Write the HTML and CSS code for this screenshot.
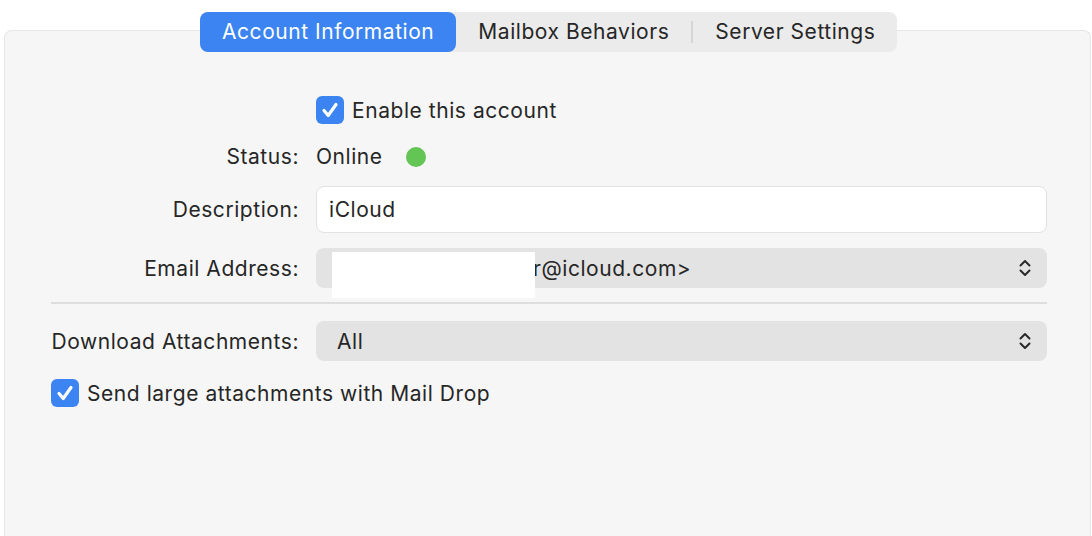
FILE: index.html
```html
<!DOCTYPE html>
<html lang="en">
<head>
    <meta charset="UTF-8">
    <meta name="viewport" content="width=device-width, initial-scale=1.0">
    <title>Account Information</title>
    <link rel="stylesheet" href="styles.css">
</head>
<body>
    <div class="tabs">
        <div class="tab active">Account Information</div>
        <div class="tab">Mailbox Behaviors</div>
        <div class="tab-sep"></div>
        <div class="tab">Server Settings</div>
    </div>
    <div class="panel">
        <div class="row row-enable">
            <div></div>
            <label class="check">
                <span class="box">
                    <svg width="28" height="28" viewBox="0 0 28 28"><path d="M8 14.5 L12.2 19.5 L20 8.5" fill="none" stroke="#fff" stroke-width="3.2" stroke-linecap="round" stroke-linejoin="round"/></svg>
                </span>
                Enable this account
            </label>
        </div>
        <div class="row row-status">
            <div class="label">Status:</div>
            <div class="status">Online <span class="dot"></span></div>
        </div>
        <div class="row row-desc">
            <div class="label">Description:</div>
            <div class="input">iCloud</div>
        </div>
        <div class="row row-email">
            <div class="label">Email Address:</div>
            <div class="select">
                <span class="email-text">r@icloud.com&gt;</span>
                <span class="redact"></span>
                <svg class="chev" width="16" height="22" viewBox="0 0 16 22"><path d="M3.5 8.5 L8 4 L12.5 8.5 M3.5 13.5 L8 18 L12.5 13.5" fill="none" stroke="#2a2a2a" stroke-width="2" stroke-linecap="round" stroke-linejoin="round"/></svg>
            </div>
        </div>
        <div class="divider"></div>
        <div class="row row-download">
            <div class="label">Download Attachments:</div>
            <div class="select">
                <span class="all">All</span>
                <svg class="chev" width="16" height="22" viewBox="0 0 16 22"><path d="M3.5 8.5 L8 4 L12.5 8.5 M3.5 13.5 L8 18 L12.5 13.5" fill="none" stroke="#2a2a2a" stroke-width="2" stroke-linecap="round" stroke-linejoin="round"/></svg>
            </div>
        </div>
        <label class="check row-drop">
            <span class="box">
                <svg width="28" height="28" viewBox="0 0 28 28"><path d="M8 14.5 L12.2 19.5 L20 8.5" fill="none" stroke="#fff" stroke-width="3.2" stroke-linecap="round" stroke-linejoin="round"/></svg>
            </span>
            Send large attachments with Mail Drop
        </label>
    </div>
</body>
</html>
```

FILE: styles.css
```css
body {
    font-family: Inter, "Liberation Sans", sans-serif;
    font-size: 21px;
    letter-spacing: 0.55px;
    color: #262626;
    margin: 0;
    padding-top: 12px;
    background-color: #ffffff;
    overflow: hidden;
}
.tabs {
    display: flex;
    align-items: center;
    width: max-content;
    height: 40px;
    margin: 0 0 -22px 200px;
    position: relative;
    z-index: 1;
    background-color: #ebebeb;
    border-radius: 8px;
}
.tab {
    height: 40px;
    line-height: 40px;
    padding: 0 22px;
}
.tab.active {
    background-color: #3b84f1;
    color: #fff;
    border-radius: 8px;
    padding: 0 22px;
}
.tab-sep {
    width: 2px;
    height: 22px;
    background-color: #d6d6d6;
}
.panel {
    margin: 0 1px 0 4px;
    height: 510px;
    background-color: #f6f6f6;
    border: 1px solid #e6e6e6;
    border-bottom: none;
    border-radius: 8px 8px 0 0;
    padding: 65px 43px 0 46px;
    box-sizing: border-box;
}
.row {
    display: grid;
    grid-template-columns: 248px 1fr;
    column-gap: 17px;
    align-items: center;
}
.label {
    text-align: right;
    white-space: nowrap;
}
.check {
    display: flex;
    align-items: center;
    gap: 8px;
    height: 28px;
}
.box {
    width: 28px;
    height: 28px;
    background-color: #3b84f1;
    border-radius: 6px;
    display: flex;
}
.row-status {
    margin-top: 20px;
    height: 24px;
}
.status {
    display: flex;
    align-items: center;
}
.dot {
    width: 20px;
    height: 20px;
    border-radius: 50%;
    background-color: #62c554;
    margin-left: 23px;
}
.row-desc {
    margin-top: 18px;
}
.input {
    height: 47px;
    box-sizing: border-box;
    background-color: #fff;
    border: 1px solid #e2e2e2;
    border-radius: 8px;
    padding-left: 12px;
    display: flex;
    align-items: center;
}
.row-email {
    margin-top: 15px;
}
.select {
    height: 40px;
    background-color: #e3e3e3;
    border-radius: 8px;
    display: flex;
    align-items: center;
    position: relative;
    padding: 0 14px 0 21px;
}
.email-text {
    margin-left: 196px;
}
.redact {
    position: absolute;
    left: 16px;
    top: 4px;
    width: 203px;
    height: 46px;
    background-color: #fff;
}
.chev {
    margin-left: auto;
}
.divider {
    height: 2px;
    background-color: #dedede;
    margin-top: 14px;
}
.row-download {
    margin-top: 17px;
}
.row-drop {
    margin-top: 18px;
}
```
